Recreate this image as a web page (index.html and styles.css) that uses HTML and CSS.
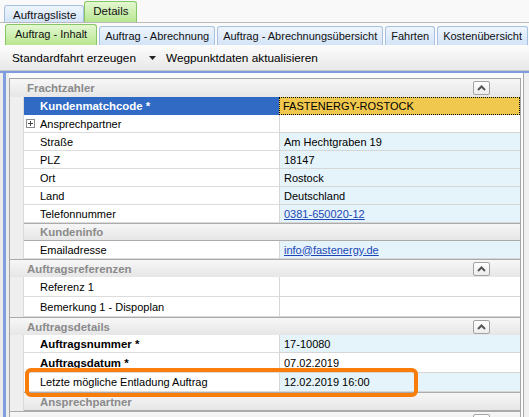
FILE: index.html
```html
<!DOCTYPE html>
<html lang="de">
<head>
<meta charset="utf-8">
<title>Details</title>
<link rel="stylesheet" href="styles.css">
</head>
<body>
<div class="app">
  <div class="tabs1">
    <div class="tab t-blue t1">Auftragsliste</div>
    <div class="tab t-green t1 sel">Details</div>
  </div>
  <div class="tabs2">
    <div class="tab t-green t2 sel">Auftrag - Inhalt</div>
    <div class="tab t-blue t2">Auftrag - Abrechnung</div>
    <div class="tab t-blue t2">Auftrag - Abrechnungsübersicht</div>
    <div class="tab t-blue t2">Fahrten</div>
    <div class="tab t-blue t2">Kostenübersicht</div>
  </div>
  <div class="toolbar">
    <span class="tb-item">Standardfahrt erzeugen</span>
    <span class="tb-dd"><svg width="7" height="4" viewBox="0 0 7 4"><path d="M0 0H7L3.5 4Z" fill="#222"/></svg></span>
    <span class="tb-item">Wegpunktdaten aktualisieren</span>
  </div>
  <div class="bluebar"></div>
  <div class="main">
    <div class="leftstrip"><div class="vbar"></div></div>
    <div class="gridwrap">
      <div class="grid">
        <div class="hdr first"><span>Frachtzahler</span><span class="cbtn"><svg width="9" height="6" viewBox="0 0 9 6"><path d="M1 5L4.5 1.5L8 5" fill="none" stroke="#555" stroke-width="2"/></svg></span></div>
        <div class="row"><div class="ind"></div><div class="lab selected">Kundenmatchcode *</div><div class="val gold">FASTENERGY-ROSTOCK</div></div>
        <div class="row"><div class="ind"></div><div class="lab plus"><span class="pbox"></span>Ansprechpartner</div><div class="val white"></div></div>
        <div class="row"><div class="ind"></div><div class="lab">Straße</div><div class="val">Am Hechtgraben 19</div></div>
        <div class="row"><div class="ind"></div><div class="lab">PLZ</div><div class="val">18147</div></div>
        <div class="row"><div class="ind"></div><div class="lab">Ort</div><div class="val">Rostock</div></div>
        <div class="row"><div class="ind"></div><div class="lab">Land</div><div class="val">Deutschland</div></div>
        <div class="row"><div class="ind"></div><div class="lab">Telefonnummer</div><div class="val"><span class="link">0381-650020-12</span></div></div>
        <div class="row sub"><div class="ind"></div><div class="subhdr">Kundeninfo</div></div>
        <div class="row"><div class="ind"></div><div class="lab">Emailadresse</div><div class="val"><span class="link">info@fastenergy.de</span></div></div>
        <div class="hdr"><span>Auftragsreferenzen</span><span class="cbtn"><svg width="9" height="6" viewBox="0 0 9 6"><path d="M1 5L4.5 1.5L8 5" fill="none" stroke="#555" stroke-width="2"/></svg></span></div>
        <div class="row h20"><div class="ind"></div><div class="lab">Referenz 1</div><div class="val white"></div></div>
        <div class="row h20"><div class="ind"></div><div class="lab">Bemerkung 1 - Dispoplan</div><div class="val white"></div></div>
        <div class="hdr"><span>Auftragsdetails</span><span class="cbtn"><svg width="9" height="6" viewBox="0 0 9 6"><path d="M1 5L4.5 1.5L8 5" fill="none" stroke="#555" stroke-width="2"/></svg></span></div>
        <div class="row"><div class="ind"></div><div class="lab bold">Auftragsnummer *</div><div class="val">17-10080</div></div>
        <div class="row h20"><div class="ind"></div><div class="lab bold">Auftragsdatum *</div><div class="val white">07.02.2019</div></div>
        <div class="row h19"><div class="ind"></div><div class="lab">Letzte mögliche Entladung Auftrag</div><div class="val">12.02.2019 16:00</div></div>
        <div class="row sub h19"><div class="ind"></div><div class="subhdr">Ansprechpartner</div></div>
        <div class="hdr"><span>Einsatz</span><span class="cbtn"><svg width="9" height="6" viewBox="0 0 9 6"><path d="M1 5L4.5 1.5L8 5" fill="none" stroke="#555" stroke-width="2"/></svg></span></div>
      </div>
    </div>
    <div class="rightstrip"></div>
    <div class="highlight"></div>
  </div>
</div>
</body>
</html>
```
FILE: styles.css
```css
html, body {
  margin: 0;
  padding: 0;
}
body {
  width: 529px;
  height: 417px;
  overflow: hidden;
  background: #f7f7f7;
  font-family: "Liberation Sans", Arial, sans-serif;
  font-size: 11px;
  color: #000;
}
.app {
  display: flex;
  flex-direction: column;
}
.tabs1 {
  height: 23px;
  box-sizing: border-box;
  display: flex;
  align-items: flex-end;
  padding-left: 4px;
  border-bottom: 1px solid #b9b9b9;
  background: #f9f9f9;
}
.tab {
  box-sizing: border-box;
  display: flex;
  align-items: center;
  border-radius: 3px 3px 0 0;
  font-size: 11px;
  color: #111;
  white-space: nowrap;
  flex: none;
}
.t-blue {
  border: 1px solid #a8c0e0;
  border-bottom: none;
  background: linear-gradient(#eef5fd, #d3e4f8);
}
.t-green {
  border: 1px solid #86c765;
  border-bottom: none;
  background: linear-gradient(#e4f8d2, #b8e68f);
}
.t1 {
  height: 17px;
  padding: 1px 7px 0 8px;
  font-size: 11.5px;
}
.t1.sel {
  height: 21px;
  padding: 0 8px 2px 8px;
}
.tabs2 {
  height: 22px;
  box-sizing: border-box;
  display: flex;
  align-items: flex-end;
  gap: 2px;
  padding-left: 5px;
  background: #fafafa;
  overflow: hidden;
}
.t2 {
  height: 19px;
  padding: 0 5px 0 5px;
}
.t2.sel {
  height: 21px;
  padding: 0 9px 2px 9px;
}
.toolbar {
  height: 26px;
  box-sizing: border-box;
  display: flex;
  align-items: center;
  padding-left: 12px;
  background: linear-gradient(#fdfdfd, #e8e8e8);
  border-bottom: 1px solid #c9c9c9;
  font-size: 11.8px;
}
.tb-dd {
  display: flex;
  align-items: center;
  margin: 0 10px 0 13px;
}
.bluebar {
  height: 2px;
  background: #7f9be0;
}
.main {
  position: relative;
  display: flex;
  height: 344px;
  background: #fcfcfc;
}
.leftstrip {
  width: 9px;
  display: flex;
  background: #ececec;
}
.vbar {
  width: 3px;
  margin-left: 3px;
  background: #809ee0;
}
.gridwrap {
  width: 512px;
  padding-top: 5px;
  background: #fcfcfc;
}
.grid {
  border: 1px solid #a5a5a5;
  border-bottom: none;
  background: #fff;
}
.hdr {
  height: 18px;
  box-sizing: border-box;
  display: flex;
  align-items: center;
  padding-left: 17px;
  border-top: 1px solid #aaaaaa;
  background: linear-gradient(#f7f7f7, #e6e6e6);
  font-weight: bold;
  color: #8a8a8a;
  font-size: 11.4px;
}
.hdr.first {
  border-top: none;
}
.cbtn {
  margin-left: auto;
  margin-right: 30px;
  width: 17px;
  height: 14px;
  box-sizing: border-box;
  border: 1px solid #a3a3a3;
  border-radius: 2px;
  background: linear-gradient(#ffffff, #ececec);
  display: flex;
  align-items: center;
  justify-content: center;
}
.row {
  height: 18px;
  display: flex;
}
.row.h20 { height: 20px; }
.row.h19 { height: 19px; }
.ind {
  width: 13px;
  flex: none;
  background: #efefef;
  border-right: 1px solid #dadada;
}
.lab {
  width: 255px;
  flex: none;
  box-sizing: border-box;
  display: flex;
  align-items: center;
  padding-left: 16px;
  border-bottom: 1px solid #dcdcdc;
  background: #fff;
  white-space: nowrap;
}
.lab.bold {
  font-weight: bold;
  font-size: 11.4px;
}
.lab.selected {
  background: #316ac5;
  color: #fff;
  font-weight: bold;
  font-size: 11.4px;
  border-bottom-color: #316ac5;
}
.lab.plus {
  padding-left: 2px;
}
.pbox {
  width: 9px;
  height: 9px;
  box-sizing: border-box;
  border: 1px solid #8c8c8c;
  margin-right: 5px;
  background:
    linear-gradient(#444, #444) center / 5px 1px no-repeat,
    linear-gradient(#444, #444) center / 1px 5px no-repeat,
    #fff;
}
.val {
  flex: 1;
  box-sizing: border-box;
  display: flex;
  align-items: center;
  padding-left: 4px;
  border-left: 1px solid #d6d6d6;
  border-bottom: 1px solid #d6d6d6;
  background: #e5f3fa;
  white-space: nowrap;
}
.val.white {
  background: #fff;
}
.val.gold {
  background: #f1c84e;
  border: 1px dotted #000;
  padding-left: 3px;
}
.link {
  color: #1b47b7;
  text-decoration: underline;
}
.row.sub .subhdr {
  flex: 1;
  box-sizing: border-box;
  display: flex;
  align-items: center;
  padding-left: 16px;
  border-top: 1px solid #ababab;
  border-bottom: 1px solid #ababab;
  background: linear-gradient(#f6f6f6, #e6e6e6);
  font-weight: bold;
  color: #8a8a8a;
  font-size: 11.4px;
}
.rightstrip {
  flex: 1;
  margin-left: 2px;
  border-left: 1px solid #a9a9a9;
  background: #f0f0f0;
}
.highlight {
  position: absolute;
  left: 25px;
  top: 295px;
  width: 393px;
  height: 29px;
  box-sizing: border-box;
  border: 4.5px solid #f97d0a;
  border-radius: 6px;
}
```
